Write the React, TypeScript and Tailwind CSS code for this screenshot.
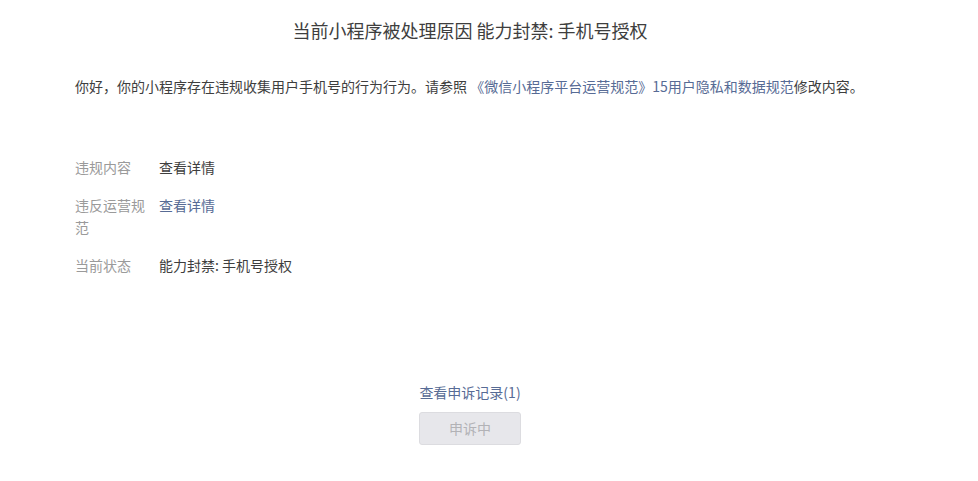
const font = {
  fontFamily: '"Noto Sans CJK SC", "Noto Sans", sans-serif',
};

type Row = { label: string; value: string; link?: boolean };

const rows: Row[] = [
  { label: "违规内容", value: "查看详情" },
  { label: "违反运营规范", value: "查看详情", link: true },
  { label: "当前状态", value: "能力封禁: 手机号授权" },
];

export default function App() {
  return (
    <div className="min-h-[481px] w-[978px] bg-white" style={font}>
      <div className="ml-[75px] w-[790px] pt-[18px]">
        <h2 className="text-center text-[18px] leading-[24px] font-normal text-[#3e3e3e]">
          当前小程序被处理原因 能力封禁: 手机号授权
        </h2>

        <p className="mt-[33px] text-[14px] leading-[22px] text-[#3e3e3e]">
          你好，你的小程序存在违规收集用户手机号的行为行为。请参照{" "}
          <a className="text-[#576b95]">《微信小程序平台运营规范》15用户隐私和数据规范</a>
          修改内容。
        </p>

        <dl className="mt-[59px] flex flex-col gap-4 text-[14px] leading-[22px]">
          {rows.map((r) => (
            <div key={r.label} className="flex">
              <dt className="w-[72px] mr-[12px] text-[#9a9a9a]">{r.label}</dt>
              <dd className={r.link ? "text-[#576b95]" : "text-[#3e3e3e]"}>
                {r.value}
              </dd>
            </div>
          ))}
        </dl>

        <div className="mt-[105px] flex flex-col items-center">
          <a className="text-[14px] leading-[22px] text-[#576b95]">查看申诉记录(1)</a>
          <button
            disabled
            className="mt-[9px] h-[33px] w-[102px] rounded-[3px] border border-[#dcdce0] bg-[#e7e7eb] text-[14px] text-[#b2b2b6]"
          >
            申诉中
          </button>
        </div>
      </div>
    </div>
  );
}
